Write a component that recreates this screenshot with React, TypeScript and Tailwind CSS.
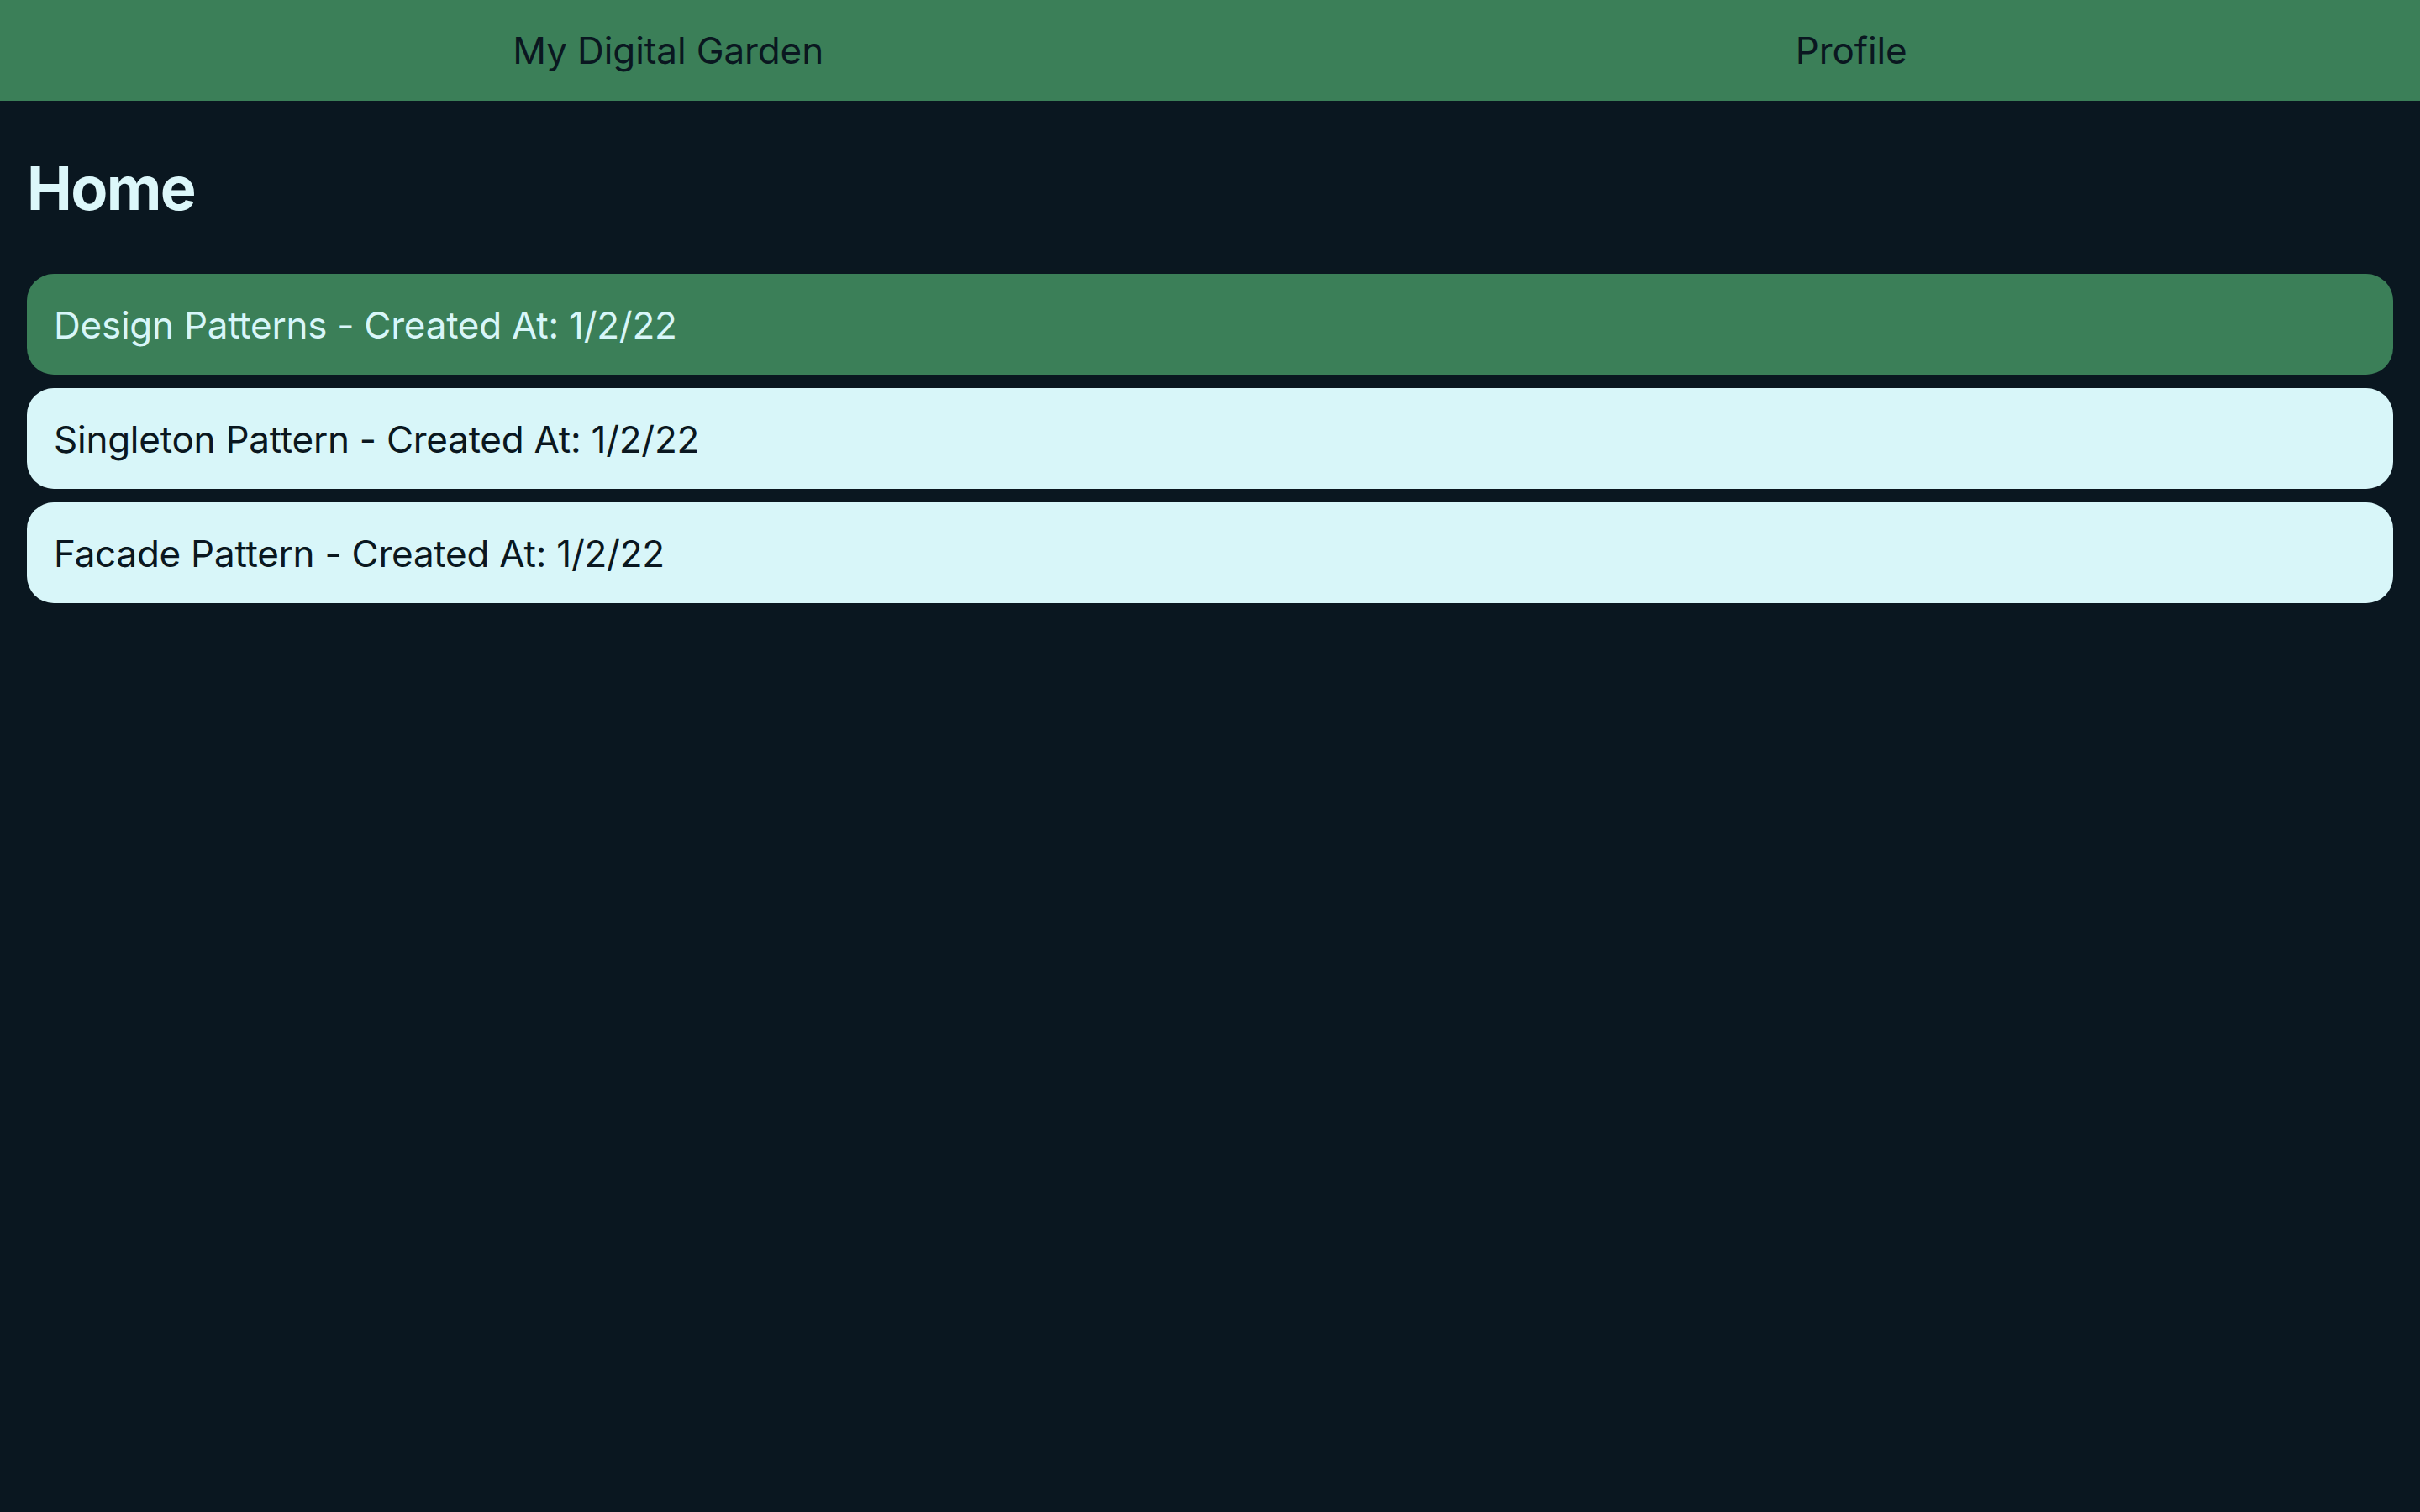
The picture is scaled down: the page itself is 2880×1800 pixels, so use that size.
const notes = [
  { title: "Design Patterns", createdAt: "1/2/22", active: true },
  { title: "Singleton Pattern", createdAt: "1/2/22", active: false },
  { title: "Facade Pattern", createdAt: "1/2/22", active: false },
];

export default function App() {
  return (
    <div className="min-h-screen w-full bg-[#0a1720] font-['Inter',sans-serif]">
      {/* Top nav */}
      <nav className="h-[120px] px-[32px] flex items-center justify-around bg-[#3b7f58] text-[#0a1720] text-[44px] tracking-[-0.1px]">
        <span>My Digital Garden</span>
        <span>Profile</span>
      </nav>

      {/* Page */}
      <main className="px-[32px] pt-[68px]">
        <h1 className="text-[72px] leading-none font-bold tracking-[-1.6px] text-[#dcf7fa] mb-[66px]">Home</h1>
        <ul className="flex flex-col gap-[16px]">
          {notes.map((note) => (
            <li
              key={note.title}
              className={
                note.active
                  ? "h-[120px] px-[32px] pt-[2px] flex items-center rounded-[32px] text-[44px] tracking-[-0.25px] bg-[#3b7f58] text-[#d8f6f9]"
                  : "h-[120px] px-[32px] pt-[2px] flex items-center rounded-[32px] text-[44px] tracking-[-0.25px] bg-[#d8f6f9] text-[#0a1720]"
              }
            >
              {note.title} - Created At: {note.createdAt}
            </li>
          ))}
        </ul>
      </main>
    </div>
  );
}
